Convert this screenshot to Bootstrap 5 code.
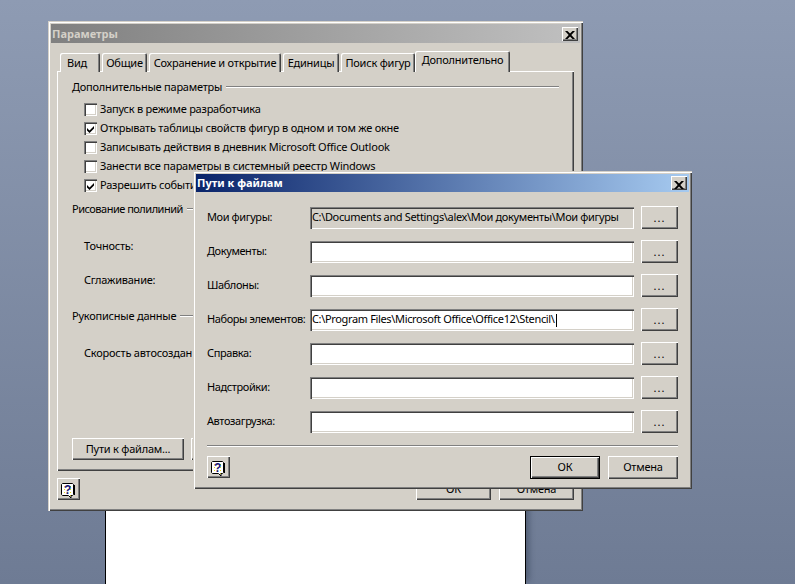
<!DOCTYPE html>
<html lang="ru">
<head>
<meta charset="utf-8">
<title>Параметры</title>
<link href="https://cdn.jsdelivr.net/npm/bootstrap@5.3.0/dist/css/bootstrap.min.css" rel="stylesheet">
<style>
html,body{height:100%;margin:0}
body{width:795px;height:584px;overflow:hidden;position:relative;background:linear-gradient(180deg,#8e9bb3 0%,#6e7b94 100%);font:11px/14px "Noto Sans",sans-serif;letter-spacing:-.22px;color:#000}
.sheet{position:absolute;left:105px;top:300px;width:421px;height:284px;background:#fff;border-left:1px solid #000;border-right:1px solid #000;box-shadow:6px 0 6px -3px rgba(40,50,70,.45)}
.win{position:absolute;background:#d4d0c8;padding:3px;box-shadow:inset 1px 1px 0 #d4d0c8,inset 2px 2px 0 #fff,inset -1px -1px 0 #404040,inset -2px -2px 0 #808080}
.win-a{left:48px;top:21px;width:535px;height:490px}
.win-b{left:193px;top:171px;width:499px;height:318px}
.titlebar{height:19px;padding:0 2px 0 1px;font-weight:700;font-size:11px;letter-spacing:0}
.win-a .titlebar{background:linear-gradient(90deg,#808080,#c0c0c0);color:#d4d0c8}
.win-b .titlebar{height:18px;background:linear-gradient(90deg,#0a246a,#a6caf0);color:#fff}
.bevel.btn{background:#d4d0c8;border-radius:0;box-shadow:inset 1px 1px 0 #fff,inset -1px -1px 0 #404040,inset -2px -2px 0 #808080}
.closer.btn{width:16px;height:14px;padding:0;border:0}
.closer svg{display:block;margin:3px 0 0 3px}
.pane{padding:8px 6px 0}
.tabrow.nav-tabs{border:0;height:21px;position:relative;z-index:1;align-items:flex-end;flex-wrap:nowrap;--bs-nav-tabs-border-width:0;margin-left:3px}
.tabrow .nav-link{height:19px;margin:0 2px 0 0;padding:3px 0 0;text-align:center;color:#000;background:#d4d0c8;border:0;border-radius:2px 2px 0 0;box-shadow:inset 1px 1px 0 #fff,inset -1px 0 0 #404040,inset -2px 0 0 #808080;font-size:11px;white-space:nowrap}
.tabrow .nav-link.active{height:21px;margin:0;padding-top:2px;color:#000;background:#d4d0c8}
.tabrow .nav-link.tw1{width:40px;padding-right:6px}
.tw2{width:45px}.tw3{width:132px}.tw4{width:56px}.tw5{width:74px;margin-right:0!important}.tw6{width:95px}
.panel{height:400px;margin-top:-1px;padding:9px 15px 11px;background:#d4d0c8;box-shadow:inset 1px 1px 0 #fff,inset -1px -1px 0 #404040,inset -2px -2px 0 #808080}
.grouphead{height:14px;white-space:nowrap}
.grouphead i{display:block;flex:1;height:2px;margin-left:4px;background:#808080;border-bottom:1px solid #fff}
.checks{margin:6px 0 7px 12px}
.checkrow{height:19px;margin:0;padding:0;min-height:0;white-space:nowrap}
.checkrow .form-check-label{margin-top:-2px}
.checkrow .form-check-input{float:none;flex:none;width:13px;height:13px;margin:0 3px 0 0;border:0;border-radius:0;background-color:#fff;box-shadow:inset 1px 1px 0 #808080,inset 2px 2px 0 #404040,inset -1px -1px 0 #fff,inset -2px -2px 0 #d4d0c8}
.checkrow .form-check-input:checked{background-color:#fff;background-image:url("data:image/svg+xml,%3Csvg xmlns='http://www.w3.org/2000/svg' width='13' height='13'%3E%3Cpath d='M3 6l2.500 2.500L10 4v2.500L5.500 11 3 8.500z' fill='%23000'/%3E%3C/svg%3E");background-size:13px 13px}
.sub{margin-left:12px;height:14px;white-space:nowrap}
.gapa{margin-top:23px}.gapb{margin-top:20px}.gapc{margin-top:22px}.gapd{margin-top:23px}
.narrowtext{letter-spacing:-.5px}
.wbtn.btn{height:22px;padding:0;border:0;border-radius:0;color:#000;background:#d4d0c8;font:inherit;letter-spacing:inherit;box-shadow:inset 1px 1px 0 #fff,inset -1px -1px 0 #404040,inset -2px -2px 0 #808080}
.wbtn.bw-path{width:112px}.wbtn.bw-color{width:150px;margin-left:7px}
.footer-a{padding:7px 6px 0}
.wbtn.bw-ok{width:75px}
.wbtn.helpbtn{width:23px;height:22px}
.helpbtn svg{display:block;margin:3px 0 0 4px}
.formbody{padding:14px 11px 0}
.filerow{height:23px;margin-bottom:11px}
.filerow.lastrow{margin-bottom:0}
.filerow label{width:103px;margin:-2px 0 0;white-space:nowrap;letter-spacing:-.4px}
.filerow .form-control{flex:none;width:324px;height:22px;margin-top:1px;padding:0 0 2px 2px;border:0;border-radius:0;background:#fff;font:inherit;letter-spacing:-.35px;color:#000;white-space:nowrap;box-shadow:inset 1px 1px 0 #808080,inset 2px 2px 0 #404040,inset -1px -1px 0 #fff,inset -2px -2px 0 #d4d0c8}
.filerow .form-control.lockfield{background:#d4d0c8}
.caretline{display:flex;align-items:center}
.caretline b{display:inline-block;width:1px;height:13px;margin:2px 0 0 1px;background:#000}
.wbtn.dots{width:37px;height:23px;margin-left:7px;letter-spacing:1px}
.rule{height:2px;margin:12px 0 9px;background:#808080;border-bottom:1px solid #fff}
.wbtn.bw-dlg{width:70px;height:23px;padding-bottom:1px}
.wbtn.bw-def{box-shadow:inset 0 0 0 1px #000,inset 2px 2px 0 #fff,inset -2px -2px 0 #404040,inset -3px -3px 0 #808080}
</style>
</head>
<body>
<div class="sheet"></div>

<section class="win win-a">
  <header class="titlebar d-flex align-items-center justify-content-between">
    <span>Параметры</span>
    <button class="btn bevel closer" type="button" aria-label="Закрыть"><svg width="10" height="8" viewBox="0 0 10 8"><path d="M0 0h2.500L5 2.500 7.500 0H10L6.300 4 10 8H7.500L5 5.500 2.500 8H0l3.700-4z" fill="#000"/></svg></button>
  </header>
  <div class="pane">
    <ul class="nav nav-tabs tabrow">
      <li class="nav-item"><a class="nav-link tw1" href="#">Вид</a></li>
      <li class="nav-item"><a class="nav-link tw2" href="#">Общие</a></li>
      <li class="nav-item"><a class="nav-link tw3" href="#">Сохранение и открытие</a></li>
      <li class="nav-item"><a class="nav-link tw4" href="#">Единицы</a></li>
      <li class="nav-item"><a class="nav-link tw5" href="#">Поиск фигур</a></li>
      <li class="nav-item"><a class="nav-link active tw6" href="#">Дополнительно</a></li>
    </ul>
    <div class="panel d-flex flex-column">
      <div class="grouphead d-flex align-items-center">Дополнительные параметры<i></i></div>
      <div class="checks">
        <div class="form-check checkrow d-flex align-items-center"><input class="form-check-input" type="checkbox" id="c1"><label class="form-check-label" for="c1">Запуск в режиме разработчика</label></div>
        <div class="form-check checkrow d-flex align-items-center"><input class="form-check-input" type="checkbox" id="c2" checked><label class="form-check-label" for="c2">Открывать таблицы свойств фигур в одном и том же окне</label></div>
        <div class="form-check checkrow d-flex align-items-center"><input class="form-check-input" type="checkbox" id="c3"><label class="form-check-label" for="c3">Записывать действия в дневник Microsoft Office Outlook</label></div>
        <div class="form-check checkrow d-flex align-items-center"><input class="form-check-input" type="checkbox" id="c4"><label class="form-check-label" for="c4">Занести все параметры в системный реестр Windows</label></div>
        <div class="form-check checkrow d-flex align-items-center"><input class="form-check-input" type="checkbox" id="c5" checked><label class="form-check-label" for="c5">Разрешить событи</label></div>
      </div>
      <div class="grouphead d-flex align-items-center narrowtext">Рисование полилиний<i></i></div>
      <div class="sub gapa">Точность:</div>
      <div class="sub gapb">Сглаживание:</div>
      <div class="grouphead d-flex align-items-center gapc">Рукописные данные<i></i></div>
      <div class="sub gapd">Скорость автосоздан</div>
      <div class="d-flex mt-auto">
        <button class="btn wbtn bw-path" type="button">Пути к файлам...</button>
        <button class="btn wbtn bw-color" type="button"></button>
      </div>
    </div>
  </div>
  <div class="footer-a d-flex justify-content-between">
    <button class="btn wbtn helpbtn" type="button" aria-label="Справка"><svg width="15" height="16" viewBox="0 0 15 16"><defs><pattern id="dA" width="3" height="3" patternUnits="userSpaceOnUse"><rect width="3" height="3" fill="#fff"/><rect width="1" height="1" fill="#e8d820"/></pattern></defs><path d="M1.500.5h10l1 1v10l-1 1H10v2.500L7.500 12.500h-6l-1-1v-10z" fill="url(#dA)" stroke="#000"/><path d="M13.500 2v10" stroke="#000"/><text x="6.500" y="10.500" text-anchor="middle" font-family="Liberation Sans,sans-serif" font-weight="700" font-size="12" fill="#14147a">?</text></svg></button>
    <div class="d-flex gap-2">
      <button class="btn wbtn bw-ok" type="button">ОК</button>
      <button class="btn wbtn bw-ok" type="button">Отмена</button>
    </div>
  </div>
</section>

<section class="win win-b">
  <header class="titlebar d-flex align-items-center justify-content-between">
    <span>Пути к файлам</span>
    <button class="btn bevel closer" type="button" aria-label="Закрыть"><svg width="10" height="8" viewBox="0 0 10 8"><path d="M0 0h2.500L5 2.500 7.500 0H10L6.300 4 10 8H7.500L5 5.500 2.500 8H0l3.700-4z" fill="#000"/></svg></button>
  </header>
  <div class="formbody">
    <div class="filerow d-flex align-items-center"><label>Мои фигуры:</label><div class="form-control caretline lockfield">C:\Documents and Settings\alex\Мои документы\Мои фигуры</div><button class="btn wbtn dots" type="button">...</button></div>
    <div class="filerow d-flex align-items-center"><label>Документы:</label><div class="form-control"></div><button class="btn wbtn dots" type="button">...</button></div>
    <div class="filerow d-flex align-items-center"><label>Шаблоны:</label><div class="form-control"></div><button class="btn wbtn dots" type="button">...</button></div>
    <div class="filerow d-flex align-items-center"><label>Наборы элементов:</label><div class="form-control caretline">C:\Program Files\Microsoft Office\Office12\Stencil\<b></b></div><button class="btn wbtn dots" type="button">...</button></div>
    <div class="filerow d-flex align-items-center"><label>Справка:</label><div class="form-control"></div><button class="btn wbtn dots" type="button">...</button></div>
    <div class="filerow d-flex align-items-center"><label>Надстройки:</label><div class="form-control"></div><button class="btn wbtn dots" type="button">...</button></div>
    <div class="filerow lastrow d-flex align-items-center"><label>Автозагрузка:</label><div class="form-control"></div><button class="btn wbtn dots" type="button">...</button></div>
    <div class="rule"></div>
    <div class="d-flex justify-content-between">
      <button class="btn wbtn helpbtn" type="button" aria-label="Справка"><svg width="15" height="16" viewBox="0 0 15 16"><defs><pattern id="dB" width="3" height="3" patternUnits="userSpaceOnUse"><rect width="3" height="3" fill="#fff"/><rect width="1" height="1" fill="#e8d820"/></pattern></defs><path d="M1.500.5h10l1 1v10l-1 1H10v2.500L7.500 12.500h-6l-1-1v-10z" fill="url(#dB)" stroke="#000"/><path d="M13.500 2v10" stroke="#000"/><text x="6.500" y="10.500" text-anchor="middle" font-family="Liberation Sans,sans-serif" font-weight="700" font-size="12" fill="#14147a">?</text></svg></button>
      <div class="d-flex gap-2">
        <button class="btn wbtn bw-dlg bw-def" type="button">ОК</button>
        <button class="btn wbtn bw-dlg" type="button">Отмена</button>
      </div>
    </div>
  </div>
</section>
<script src="https://cdn.jsdelivr.net/npm/bootstrap@5.3.0/dist/js/bootstrap.bundle.min.js"></script>
</body>
</html>
